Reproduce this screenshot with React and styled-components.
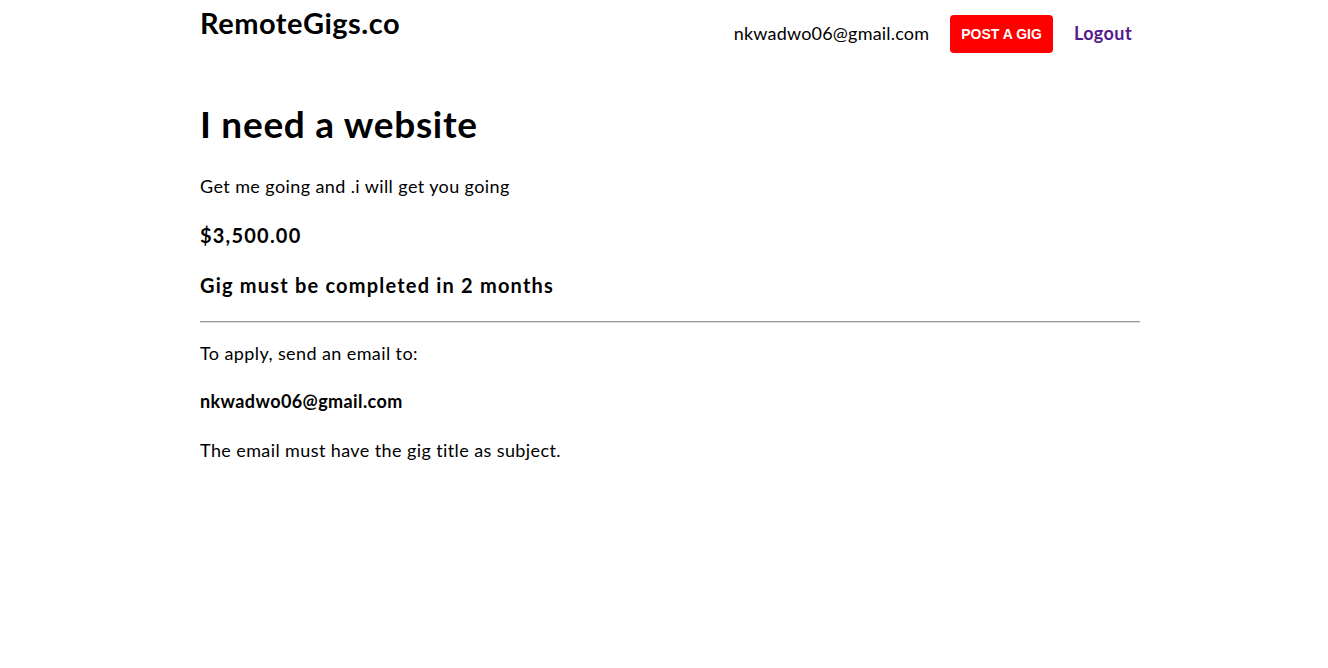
import React from 'react';
import styled, { createGlobalStyle } from 'styled-components';

const GlobalStyle = createGlobalStyle`
  body {
    margin: 0;
    background: #fff;
    color: #000;
    font-family: Lato, "Open Sans", sans-serif;
  }
`;

const Page = styled.div`
  max-width: 940px;
  margin: 0 auto;
  padding-left: 12px;
`;

const Header = styled.header`
  display: flex;
  align-items: flex-start;
  justify-content: space-between;
  height: 56px;
`;

const Logo = styled.div`
  font-size: 29px;
  font-weight: 700;
  letter-spacing: 0.5px;
  margin-top: 5px;
`;

const Nav = styled.nav`
  display: flex;
  align-items: center;
  margin-top: 15px;
`;

const UserEmail = styled.span`
  font-size: 18px;
  letter-spacing: 0.2px;
  margin-right: 21px;
  margin-top: -3px;
`;

const PostButton = styled.a`
  display: inline-flex;
  align-items: center;
  height: 38px;
  padding: 0 11px;
  background: #ff0000;
  color: #fff;
  border-radius: 4px;
  font-family: "Liberation Sans", Arial, sans-serif;
  font-weight: 700;
  font-size: 14px;
  text-decoration: none;
`;

const NavLink = styled.a`
  color: #551a8b;
  font-size: 18px;
  font-weight: 700;
  letter-spacing: 0.4px;
  text-decoration: none;
  padding: 0 8px 0 21px;
  margin-top: -3px;
`;

const Title = styled.h1`
  font-size: 37px;
  font-weight: 700;
  letter-spacing: 0.7px;
  margin: 46px 0 0;
  line-height: 1.2;
`;

const Text = styled.p`
  font-size: 18px;
  margin: ${p => p.$top || 0}px 0 0;
  line-height: 1.3;
  letter-spacing: 0.4px;
  font-weight: ${p => (p.$bold ? 700 : 400)};
`;

const Heading = styled.h3`
  font-size: 20px;
  font-weight: 700;
  letter-spacing: 1.2px;
  margin: ${p => p.$top}px 0 0;
  line-height: 1.3;
`;

const Rule = styled.hr`
  margin: 23px 0 0;
  border: none;
  border-top: 1px solid #999;
  border-bottom: 1px solid #ddd;
`;

export default function App() {
  return (
    <Page>
      <GlobalStyle />
      <Header>
        <Logo>RemoteGigs.co</Logo>
        <Nav>
          <UserEmail>nkwadwo06@gmail.com</UserEmail>
          <PostButton href="#">POST A GIG</PostButton>
          <NavLink href="#">Logout</NavLink>
        </Nav>
      </Header>
      <Title>I need a website</Title>
      <Text $top={29}>Get me going and .i will get you going</Text>
      <Heading $top={23}>$3,500.00</Heading>
      <Heading $top={24}>Gig must be completed in 2 months</Heading>
      <Rule />
      <Text $top={19}>To apply, send an email to:</Text>
      <Text $top={25} $bold>nkwadwo06@gmail.com</Text>
      <Text $top={25}>The email must have the gig title as subject.</Text>
    </Page>
  );
}
